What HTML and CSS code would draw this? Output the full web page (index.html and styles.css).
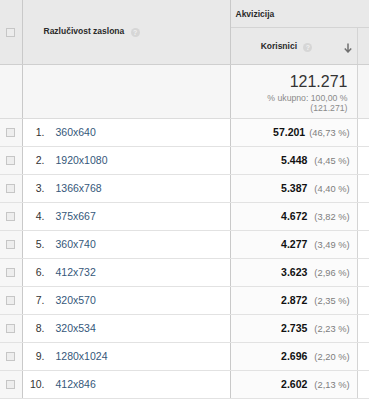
FILE: index.html
```html
<!DOCTYPE html>
<html>
<head>
<meta charset="utf-8">
<link rel="stylesheet" href="styles.css">
</head>
<body>
<table class="report">
  <colgroup>
    <col class="c-check">
    <col class="c-dim">
    <col class="c-metric">
    <col class="c-extra">
  </colgroup>
  <thead>
    <tr class="h1">
      <th class="chk-h" rowspan="2"><span class="box"></span></th>
      <th class="dim-h" rowspan="2">Razlučivost zaslona <span class="help">?</span></th>
      <th class="group-h" colspan="2">Akvizicija</th>
    </tr>
    <tr class="h2">
      <th class="metric-h"><span class="mlabel">Korisnici <span class="help">?</span></span><svg class="arrow" width="8" height="10" viewBox="0 0 8 10"><path d="M4 0.5 V8.8 M0.8 5.6 L4 9 L7.2 5.6" fill="none" stroke="#707070" stroke-width="1.5"/></svg></th>
      <th class="extra-h"></th>
    </tr>
  </thead>
  <tbody>
    <tr class="total">
      <td class="chk"></td>
      <td class="dim"></td>
      <td class="metric total-cell">
        <div class="big">121.271</div>
        <div class="small">% ukupno: 100,00 %</div>
        <div class="small">(121.271)</div>
      </td>
      <td class="extra"></td>
    </tr>
    <tr class="first"><td class="chk"><span class="box"></span></td><td class="dim"><span class="idx">1.</span><a class="link">360x640</a></td><td class="metric"><b>57.201</b><span class="pct">(46,73 %)</span></td><td class="extra"></td></tr>
    <tr><td class="chk"><span class="box"></span></td><td class="dim"><span class="idx">2.</span><a class="link">1920x1080</a></td><td class="metric"><b>5.448</b><span class="pct">(4,45 %)</span></td><td class="extra"></td></tr>
    <tr><td class="chk"><span class="box"></span></td><td class="dim"><span class="idx">3.</span><a class="link">1366x768</a></td><td class="metric"><b>5.387</b><span class="pct">(4,40 %)</span></td><td class="extra"></td></tr>
    <tr><td class="chk"><span class="box"></span></td><td class="dim"><span class="idx">4.</span><a class="link">375x667</a></td><td class="metric"><b>4.672</b><span class="pct">(3,82 %)</span></td><td class="extra"></td></tr>
    <tr><td class="chk"><span class="box"></span></td><td class="dim"><span class="idx">5.</span><a class="link">360x740</a></td><td class="metric"><b>4.277</b><span class="pct">(3,49 %)</span></td><td class="extra"></td></tr>
    <tr><td class="chk"><span class="box"></span></td><td class="dim"><span class="idx">6.</span><a class="link">412x732</a></td><td class="metric"><b>3.623</b><span class="pct">(2,96 %)</span></td><td class="extra"></td></tr>
    <tr><td class="chk"><span class="box"></span></td><td class="dim"><span class="idx">7.</span><a class="link">320x570</a></td><td class="metric"><b>2.872</b><span class="pct">(2,35 %)</span></td><td class="extra"></td></tr>
    <tr><td class="chk"><span class="box"></span></td><td class="dim"><span class="idx">8.</span><a class="link">320x534</a></td><td class="metric"><b>2.735</b><span class="pct">(2,23 %)</span></td><td class="extra"></td></tr>
    <tr><td class="chk"><span class="box"></span></td><td class="dim"><span class="idx">9.</span><a class="link">1280x1024</a></td><td class="metric"><b>2.696</b><span class="pct">(2,20 %)</span></td><td class="extra"></td></tr>
    <tr><td class="chk"><span class="box"></span></td><td class="dim"><span class="idx">10.</span><a class="link">412x846</a></td><td class="metric"><b>2.602</b><span class="pct">(2,13 %)</span></td><td class="extra"></td></tr>
  </tbody>
</table>
</body>
</html>
```

FILE: styles.css
```css
html, body {
  margin: 0;
  padding: 0;
  background: #ffffff;
}
body {
  font-family: "Liberation Sans", Arial, sans-serif;
  font-size: 10.5px;
  color: #222;
  overflow: hidden;
}
.report {
  border-collapse: collapse;
  table-layout: fixed;
  width: 369px;
}
.c-check { width: 22px; }
.c-dim { width: 208px; }
.c-metric { width: 127px; }
.c-extra { width: 12px; }

th, td {
  padding: 0;
  box-sizing: border-box;
}
thead th {
  background: #e9e9e9;
  font-weight: bold;
  font-size: 8.5px;
  color: #2a2a2a;
  text-align: left;
}
.h1 { height: 27px; }
.h2 { height: 37px; }
.chk-h {
  border-right: 1px solid #c9c9c9;
  border-bottom: 1px solid #cfcfcf;
  text-align: center !important;
}
.dim-h {
  padding-left: 21px !important;
  border-right: 1px solid #c9c9c9;
  border-bottom: 1px solid #cfcfcf;
  vertical-align: middle;
}
.group-h {
  padding-left: 5px !important;
  padding-top: 1px !important;
  border-bottom: 1px solid #d4d4d4;
  vertical-align: middle;
}
.metric-h {
  border-right: 1px solid #d4d4d4;
  border-bottom: 1px solid #cfcfcf;
  position: relative;
  text-align: center !important;
  vertical-align: middle;
  padding-top: 1px !important;
  padding-right: 14px !important;
}
.mlabel {
  display: inline-block;
}
.arrow {
  position: absolute;
  right: 5px;
  top: 15px;
}
.extra-h {
  border-bottom: 1px solid #cfcfcf;
}
.help {
  display: inline-block;
  width: 9px;
  height: 9px;
  border-radius: 50%;
  background: #d6d6d6;
  color: #f0f0f0;
  font-size: 7px;
  line-height: 9px;
  text-align: center;
  vertical-align: -1px;
  margin-left: 4px;
  font-weight: bold;
}
.box {
  display: inline-block;
  width: 9px;
  height: 9px;
  border: 1px solid #c6c6c6;
  background: #ececec;
  vertical-align: middle;
  box-sizing: border-box;
}

tbody tr { height: 28px; }
tbody td {
  border-bottom: 1px solid #e2e2e2;
  vertical-align: middle;
}
td.chk {
  background: #f7f7f7;
  border-right: 1px solid #c9c9c9;
  text-align: center;
}
td.chk .box {
  background: #eeeeee;
  margin-top: -2px;
}
td.dim {
  background: #ffffff;
  border-right: 1px solid #c9c9c9;
}
td.metric {
  background: #fbfbfb;
  border-right: 1px solid #d4d4d4;
  text-align: right;
  padding-right: 7px;
  color: #111;
}
td.extra {
  background: #ffffff;
}
.total { height: 54px; }
.total td { background: #f6f6f6; border-bottom: 1px solid #dcdcdc; }
.total td.metric { background: #f8f8f8; }
.total-cell {
  vertical-align: top !important;
  padding-top: 8px;
  padding-right: 9px !important;
}
.big {
  font-size: 16px;
  color: #333;
  line-height: 17px;
  margin-bottom: 3px;
}
.small {
  font-size: 8.7px;
  color: #8a8a8a;
  line-height: 10px;
}
.idx {
  display: inline-block;
  width: 22px;
  text-align: right;
  color: #333;
}
.link {
  color: #35577a;
  margin-left: 11px;
}
.metric b {
  font-weight: bold;
  color: #111;
}
.pct {
  color: #7d7d7d;
  font-size: 9.3px;
  margin-left: 7px;
}
.first .pct { margin-left: 4px; }
```
